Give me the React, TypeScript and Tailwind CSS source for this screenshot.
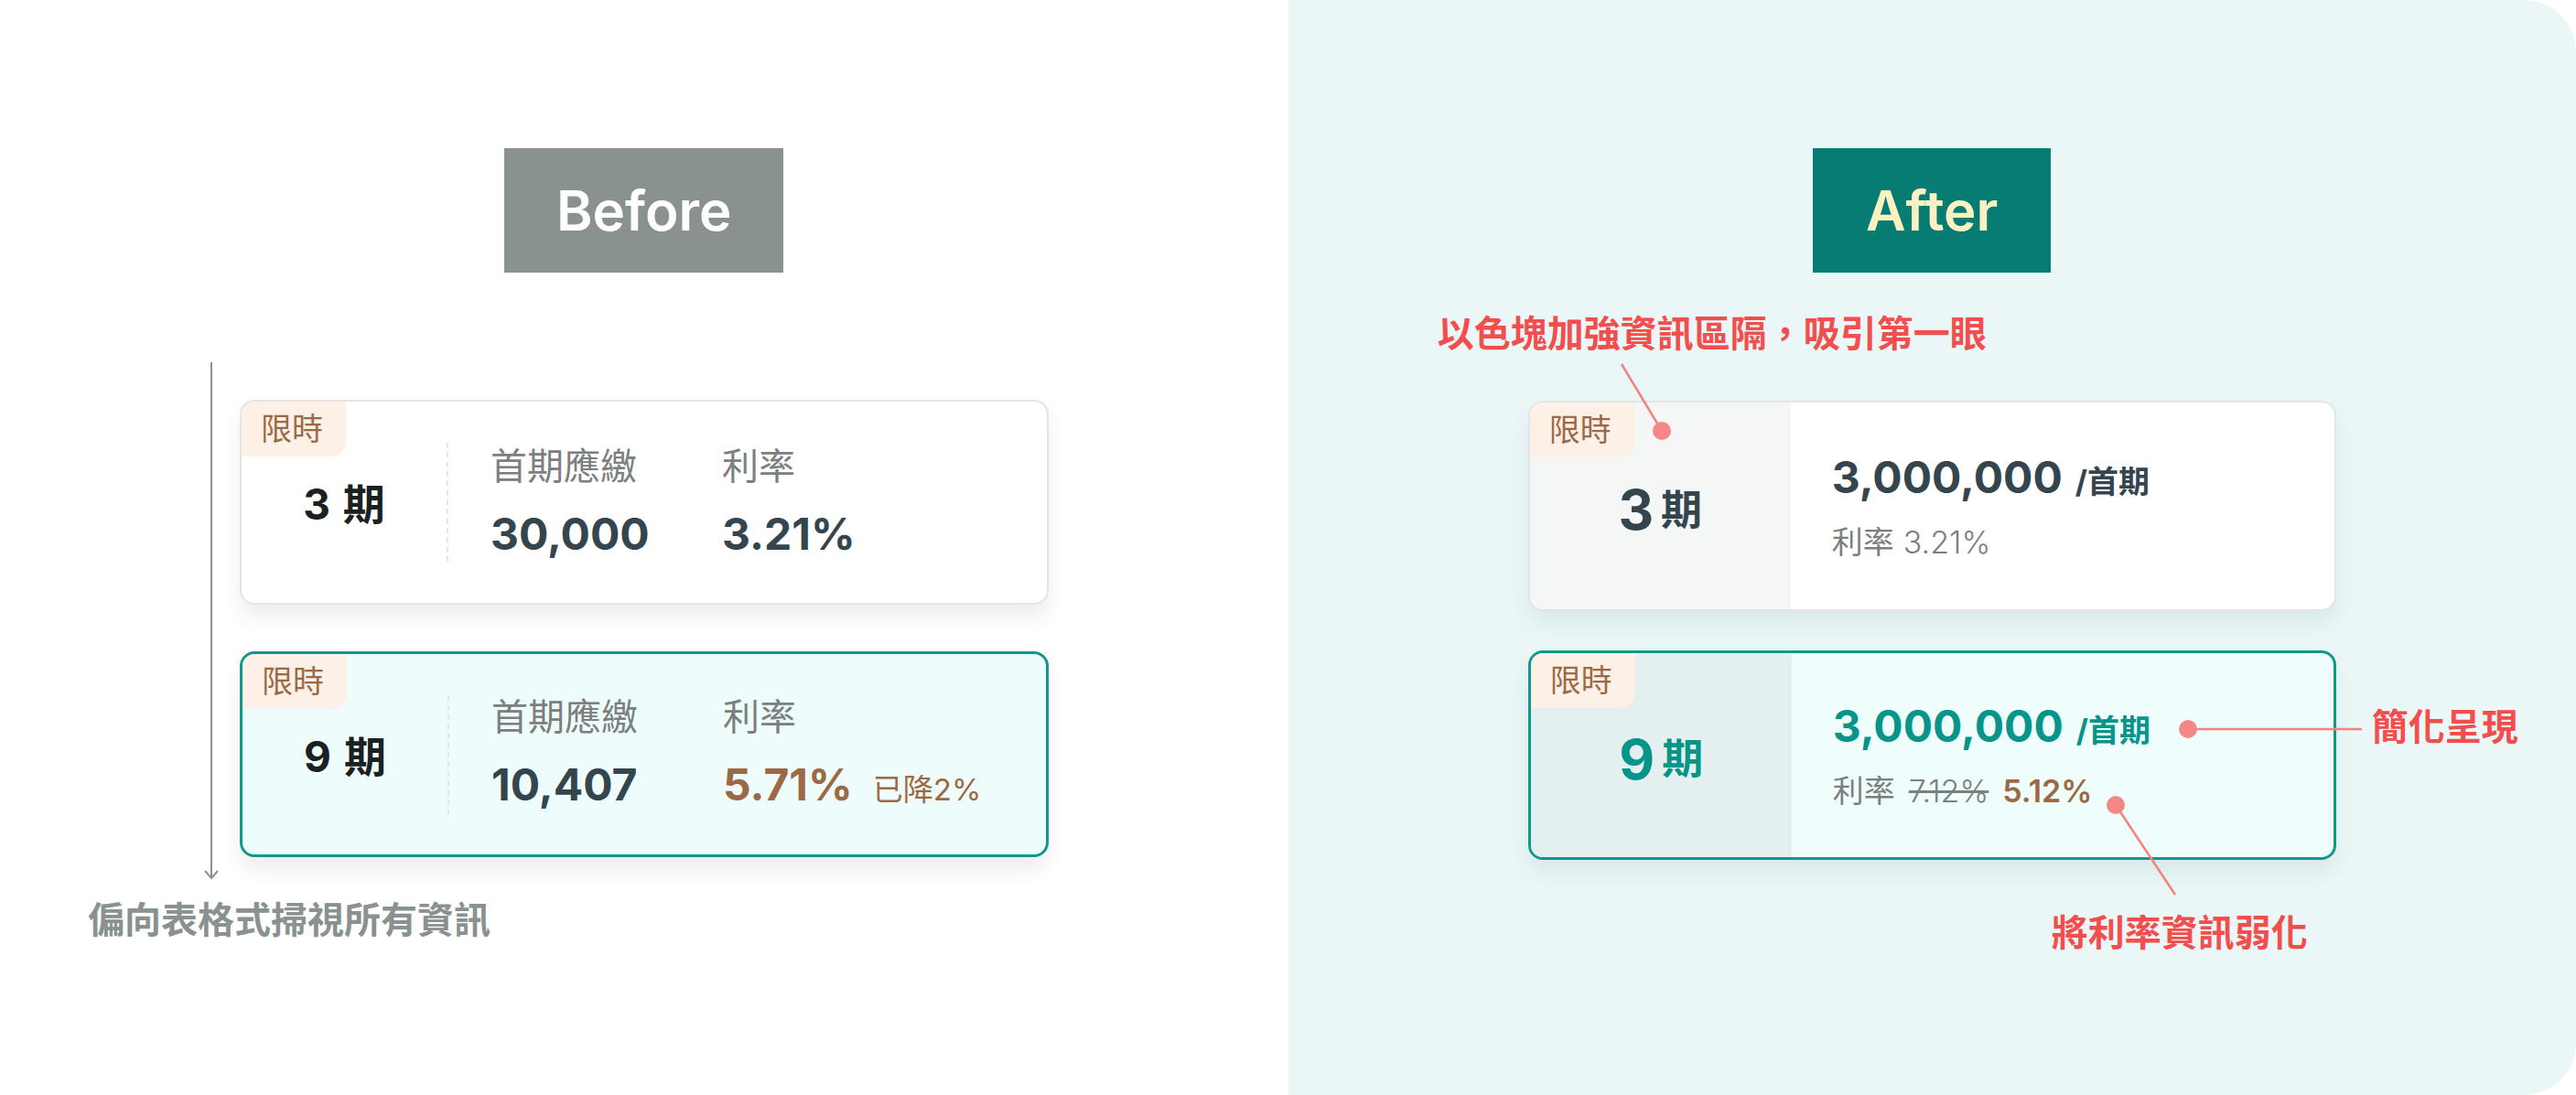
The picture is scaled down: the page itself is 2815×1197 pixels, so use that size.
import React from 'react';

const font = "font-[Inter,'Noto_Sans_CJK_TC',sans-serif]";

function Tag() {
  return (
    <div className="absolute left-0 top-0 flex h-[60px] w-[114px] items-center rounded-tl-[14px] rounded-br-[16px] bg-[#fdf0e7] pl-[21px] text-[34px] leading-none text-[#9b6a45]">
      限時
    </div>
  );
}

type BeforeProps = {
  term: string;
  pay: string;
  rate: string;
  highlight?: boolean;
};

function BeforeCard({ term, pay, rate, highlight }: BeforeProps) {
  return (
    <div
      className={
        highlight
          ? 'relative flex h-[225px] w-[884px] items-center rounded-[16px] border-[3px] border-[#13968b] bg-[#eefdfc] shadow-[0_14px_22px_rgba(0,0,0,0.07)]'
          : 'relative flex h-[224px] w-[884px] items-center rounded-[16px] border-2 border-[#e4e4e4] bg-white shadow-[0_14px_22px_rgba(0,0,0,0.07)]'
      }
    >
      <Tag />
      <div className="flex w-[224px] items-center justify-center gap-[14px] pt-[4px] text-[46px] font-bold leading-none text-[#1b2121]">
        <span>{term}</span>
        <span>期</span>
      </div>
      <div className="h-[130px] border-l-2 border-dashed border-[#dfe7e7]" />
      <div className="grid grid-cols-[253px_auto] pl-[46px] pt-[4px]">
        <div className="text-[40px] leading-[40px] text-[#7b807f]">首期應繳</div>
        <div className="text-[40px] leading-[40px] text-[#7b807f]">利率</div>
        <div className="mt-[26px] text-[48px] font-bold leading-[56px] text-[#34454d]">{pay}</div>
        <div className="mt-[26px] flex items-baseline gap-[22px]">
          <span
            className={
              highlight
                ? 'text-[48px] font-bold leading-[56px] text-[#9b6a45]'
                : 'text-[48px] font-bold leading-[56px] text-[#34454d]'
            }
          >
            {rate}
          </span>
          {highlight && <span className="text-[33px] text-[#9b6a45]">已降2%</span>}
        </div>
      </div>
    </div>
  );
}

function AfterCard({ highlight }: { highlight?: boolean }) {
  return (
    <div
      className={
        highlight
          ? 'relative flex h-[229px] w-[883px] overflow-hidden rounded-[16px] border-[3px] border-[#13968b] bg-[#effefd] shadow-[0_14px_22px_rgba(40,80,80,0.08)]'
          : 'relative flex h-[230px] w-[883px] overflow-hidden rounded-[16px] border-2 border-[#e3e4e4] bg-white shadow-[0_14px_22px_rgba(40,80,80,0.08)]'
      }
    >
      <div
        className={
          highlight
            ? 'flex w-[285px] items-center justify-center gap-[8px] bg-[#e3f0ef] pt-[8px] font-bold leading-none text-[#079489]'
            : 'flex w-[285px] items-center justify-center gap-[8px] bg-[#f5f7f6] pt-[8px] font-bold leading-none text-[#34454d]'
        }
      >
        <span className="text-[60px]">{highlight ? '9' : '3'}</span>
        <span className="text-[45px]">期</span>
      </div>
      <Tag />
      <div className="flex flex-col justify-center pl-[45px]">
        <div
          className={
            highlight
              ? 'flex items-baseline gap-[14px] font-bold leading-[56px] text-[#079489]'
              : 'flex items-baseline gap-[14px] font-bold leading-[56px] text-[#34454d]'
          }
        >
          <span className="text-[48px]">3,000,000</span>
          <span className="text-[34px]">/首期</span>
        </div>
        <div className="mt-[18px] flex items-baseline text-[34px] leading-[40px] text-[#7b807f]">
          <span>利率</span>
          {highlight ? (
            <>
              <span className="ml-[15px] font-light line-through">7.12%</span>
              <span className="ml-[15px] font-semibold text-[#9b6a45]">5.12%</span>
            </>
          ) : (
            <span className="ml-[10px] font-light">3.21%</span>
          )}
        </div>
      </div>
    </div>
  );
}

export default function App() {
  return (
    <div className={`h-[1197px] w-[2815px] bg-white ${font}`}>
      <div className="grid h-full grid-cols-2 overflow-hidden rounded-[56px]">
        {/* before */}
        <div className="flex flex-col bg-white pt-[162px]">
          <div className="flex h-[136px] w-[305px] items-center justify-center self-center bg-[#8a928f] text-[60px] font-semibold text-white">
            Before
          </div>
          <div className="ml-[223px] mt-[98px] flex gap-[23px]">
            <svg width="16" height="566" viewBox="0 0 16 566" fill="none">
              <line x1="8" y1="0" x2="8" y2="564" stroke="#8a928f" strokeWidth="2" />
              <polyline points="1,556 8,564 15,556" stroke="#8a928f" strokeWidth="2" fill="none" />
            </svg>
            <div className="flex flex-col gap-[51px] pt-[41px]">
              <BeforeCard term="3" pay="30,000" rate="3.21%" />
              <BeforeCard term="9" pay="10,407" rate="5.71%" highlight />
            </div>
          </div>
          <p className="ml-[96px] mt-[20px] text-[40px] font-bold leading-[48px] text-[#8a928f]">
            偏向表格式掃視所有資訊
          </p>
        </div>

        {/* after */}
        <div className="flex flex-col items-center rounded-r-[56px] bg-[#eaf7f6] pt-[162px]">
          <div className="flex h-[136px] w-[260px] items-center justify-center bg-[#077c72] text-[60px] font-semibold text-[#fdf0c2]">
            After
          </div>
          <div className="relative w-[883px]">
            <p className="-ml-[99px] mt-[43px] text-[40px] font-bold leading-[48px] text-[#f24e4e]">
              以色塊加強資訊區隔，吸引第一眼
            </p>
            <div className="mt-[49px] flex flex-col gap-[43px]">
              <AfterCard />
              <AfterCard highlight />
            </div>
            <p className="ml-[572px] mt-[56px] text-[40px] font-bold leading-[48px] text-[#f24e4e]">
              將利率資訊弱化
            </p>
            <p className="absolute left-[922px] top-[473px] whitespace-nowrap text-[40px] font-bold leading-[48px] text-[#f24e4e]">
              簡化呈現
            </p>
            <svg className="pointer-events-none absolute left-0 top-[140px] overflow-visible" width="1" height="1">
              <line x1="102" y1="-40" x2="146" y2="33" stroke="#f58282" strokeWidth="2.5" />
              <circle cx="146" cy="33" r="10" fill="#f68787" />
              <line x1="721" y1="359" x2="911" y2="359" stroke="#f58282" strokeWidth="2.5" />
              <circle cx="721" cy="359" r="10" fill="#f68787" />
              <line x1="642" y1="442" x2="707" y2="540" stroke="#f58282" strokeWidth="2.5" />
              <circle cx="642" cy="442" r="10" fill="#f68787" />
            </svg>
          </div>
        </div>
      </div>
    </div>
  );
}
